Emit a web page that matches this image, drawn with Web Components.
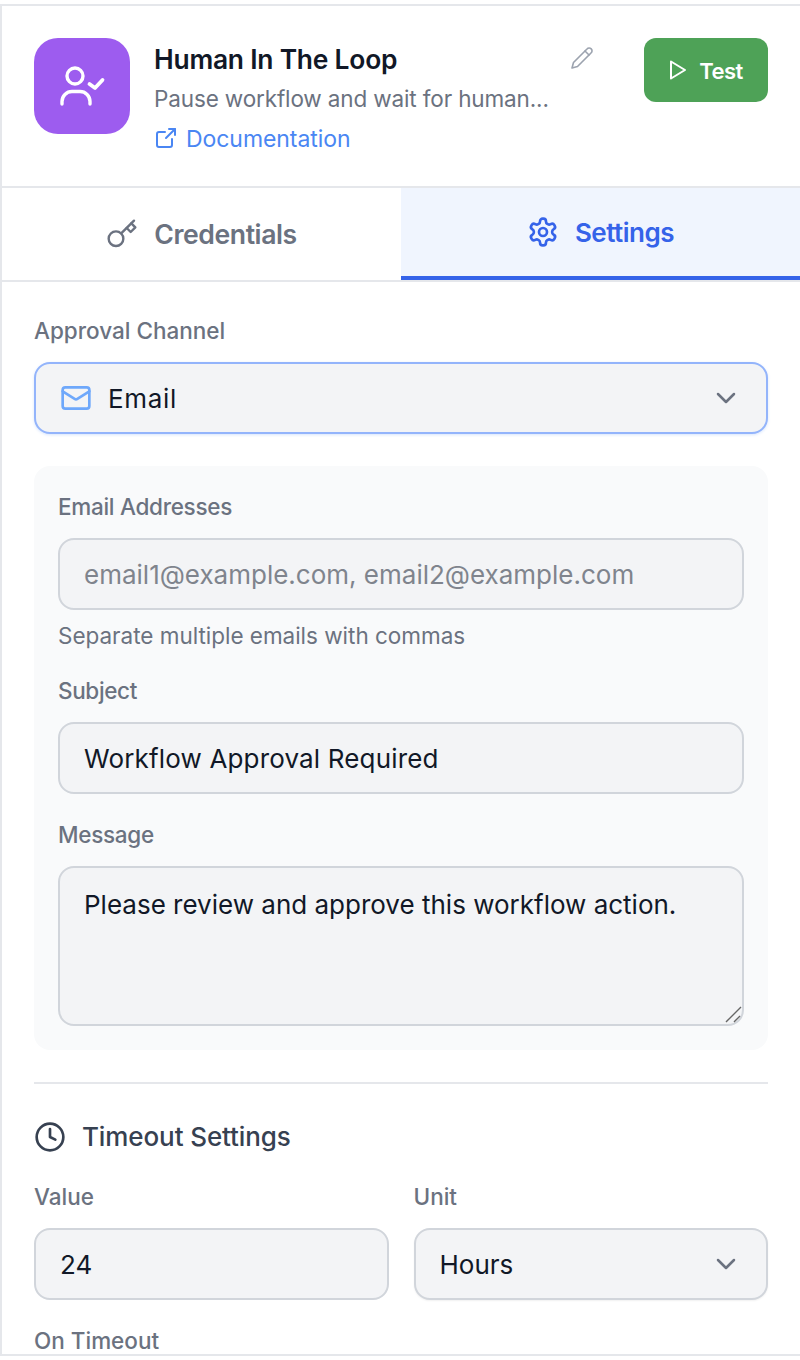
<!doctype html>
<html lang="en"><head><meta charset="utf-8"><title>Human In The Loop</title>
<style>html,body{margin:0;background:#fff}body{font-family:Inter,"Liberation Sans",sans-serif;overflow:hidden}</style></head>
<body>
<hitl-panel>
  <hitl-header slot="header" name="Human In The Loop" desc="Pause workflow and wait for human..." link="Documentation"></hitl-header>
  <hitl-tabs slot="tabs"></hitl-tabs>
  <hitl-field label="Approval Channel">
    <hitl-control kind="select" focused style="letter-spacing:.7px"><svg slot="icon" width="32" height="32" viewBox="0 0 24 24" fill="none" stroke="#6ea8fb" stroke-width="2" stroke-linecap="round" stroke-linejoin="round"><rect x="2" y="4" width="20" height="16" rx="2"/><path d="m22 7-8.97 5.7a1.94 1.94 0 0 1-2.06 0L2 7"/></svg>Email</hitl-control>
  </hitl-field>
  <hitl-card>
    <hitl-field label="Email Addresses" style="--ls:-.29px" hint="Separate multiple emails with commas"><hitl-control placeholder>email1@example.com, email2@example.com</hitl-control></hitl-field>
    <hitl-field label="Subject" style="--ls:-.35px"><hitl-control style="letter-spacing:.16px">Workflow Approval Required</hitl-control></hitl-field>
    <hitl-field label="Message" style="--ls:-.3px"><hitl-control kind="area">Please review and approve this workflow action.</hitl-control></hitl-field>
  </hitl-card>
  <hitl-section title="Timeout Settings">
    <hitl-grid>
      <hitl-field label="Value"><hitl-control>24</hitl-control></hitl-field>
      <hitl-field label="Unit"><hitl-control kind="select">Hours</hitl-control></hitl-field>
    </hitl-grid>
    <hitl-field label="On Timeout"></hitl-field>
  </hitl-section>
</hitl-panel>
<script>
const def=(name,html)=>{
  const t=document.createElement('template');t.innerHTML=html;
  customElements.define(name,class extends HTMLElement{
    constructor(){super();this.attachShadow({mode:'open'}).appendChild(t.content.cloneNode(true));}
    connectedCallback(){
      this.shadowRoot.querySelectorAll('[data-attr]').forEach(n=>{n.textContent=this.getAttribute(n.dataset.attr)||'';});
    }
  });
};
def('hitl-panel',`<style>
:host{display:block;height:1352px;margin-top:4px;box-sizing:border-box;border:2px solid #e5e7eb;border-right:0;overflow:hidden;background:#fff}
.body{padding:32px 32px 0;display:flex;flex-direction:column}
</style><slot name="header"></slot><slot name="tabs"></slot><div class="body"><slot></slot></div>`);
def('hitl-header',`<style>
:host{display:flex;box-sizing:border-box;height:182px;padding:32px 32px 0;gap:24px;border-bottom:2px solid #e5e7eb}
.tile{flex:none;width:96px;height:96px;border-radius:24px;background:#9d5cef}
.tile svg{display:block}
.text{flex:1;min-width:0;margin-right:26px;padding-top:1px;display:flex;flex-direction:column}
.row{display:flex;justify-content:space-between;height:40px;align-items:center}
h1{margin:0;font:600 26.4px/40px Inter,sans-serif;letter-spacing:-.22px;color:#111827;white-space:nowrap}
.row svg{align-self:flex-start;margin-top:7px}
p{margin:0;font:400 22.5px/40px Inter,sans-serif;letter-spacing:-.14px;color:#6b7280;white-space:nowrap}
a{display:flex;align-items:center;gap:8px;font:400 23px/40px Inter,sans-serif;letter-spacing:-.06px;color:#4a86f3;text-decoration:none;white-space:nowrap}
a svg{margin-top:-2px}
button{flex:none;width:124px;height:64px;border:0;border-radius:12px;background:#4ea257;color:#fff;font:600 22px/1 Inter,sans-serif;letter-spacing:-.6px;display:flex;align-items:center;justify-content:center;gap:12px;padding:2px 0 0 0}
button svg{margin-top:-2px}
</style>
<div class="tile"><svg width="96" height="96" viewBox="0 0 96 96" fill="none" stroke="#fff" stroke-width="3.4" stroke-linecap="round" stroke-linejoin="round"><circle cx="41" cy="38" r="8"/><path d="M28 66v-2.5a10 10 0 0 1 10-10h8a10 10 0 0 1 10 10V66"/><path stroke-width="3.8" d="M55.5 46 61 50 68.5 42"/></svg></div>
<div class="text">
  <div class="row"><h1 data-attr="name"></h1><svg width="24" height="24" viewBox="0 0 24 24" fill="none" stroke="#9ca3af" stroke-width="1.6" stroke-linecap="round" stroke-linejoin="round"><path d="M17 3a2.85 2.83 0 1 1 4 4L7.5 20.5 2 22l1.5-5.5Z"/><path d="m15 5 4 4"/></svg></div>
  <p data-attr="desc"></p>
  <a href="#"><svg width="24" height="24" viewBox="0 0 24 24" fill="none" stroke="#4a86f3" stroke-width="2" stroke-linecap="round" stroke-linejoin="round"><path d="M18 13v6a2 2 0 0 1-2 2H5a2 2 0 0 1-2-2V8a2 2 0 0 1 2-2h6"/><path d="m21 3-9 9"/><path d="M15 3h6v6"/></svg><span data-attr="link"></span></a>
</div>
<button><svg width="18" height="22" viewBox="0 0 18 22" fill="none" stroke="#fff" stroke-width="2" stroke-linejoin="round"><path d="M2 2.5 16 11 2 19.5Z"/></svg>Test</button>`);
def('hitl-tabs',`<style>
:host{display:flex;height:94px;box-sizing:border-box;border-bottom:2px solid #e5e7eb}
.tab{flex:1;display:flex;align-items:center;justify-content:center;gap:16px;font:600 26.6px/1 Inter,sans-serif;letter-spacing:-.42px;color:#6b7280;box-sizing:border-box}
.on{background:#f0f5fe;color:#3563e9;border-bottom:4px solid #3563e9;padding-top:2px;font-size:26px;letter-spacing:-.5px}
.on svg{margin-top:-2px}
</style>
<div class="tab"><svg width="32" height="32" viewBox="0 0 24 24" fill="none" stroke="#6b7280" stroke-width="1.8" stroke-linecap="round" stroke-linejoin="round"><circle cx="7.5" cy="15.5" r="5.5"/><path d="m21 2-9.6 9.6"/><path d="m15.5 7.5 3 3L22 7l-3-3"/></svg>Credentials</div>
<div class="tab on"><svg width="32" height="32" viewBox="0 0 24 24" fill="none" stroke="#3563e9" stroke-width="2" stroke-linecap="round" stroke-linejoin="round"><path d="M12.22 2h-.44a2 2 0 0 0-2 2v.18a2 2 0 0 1-1 1.73l-.43.25a2 2 0 0 1-2 0l-.15-.08a2 2 0 0 0-2.73.73l-.22.38a2 2 0 0 0 .73 2.73l.15.1a2 2 0 0 1 1 1.72v.51a2 2 0 0 1-1 1.74l-.15.09a2 2 0 0 0-.73 2.73l.22.38a2 2 0 0 0 2.73.73l.15-.08a2 2 0 0 1 2 0l.43.25a2 2 0 0 1 1 1.73V20a2 2 0 0 0 2 2h.44a2 2 0 0 0 2-2v-.18a2 2 0 0 1 1-1.73l.43-.25a2 2 0 0 1 2 0l.15.08a2 2 0 0 0 2.73-.73l.22-.39a2 2 0 0 0-.73-2.73l-.15-.08a2 2 0 0 1-1-1.74v-.5a2 2 0 0 1 1-1.74l.15-.09a2 2 0 0 0 .73-2.73l-.22-.38a2 2 0 0 0-2.73-.73l-.15.08a2 2 0 0 1-2 0l-.43-.25a2 2 0 0 1-1-1.73V4a2 2 0 0 0-2-2z"/><circle cx="12" cy="12" r="3"/></svg>Settings</div>`);
def('hitl-field',`<style>
:host{display:block}
label{display:block;font:500 22.5px/34px Inter,sans-serif;letter-spacing:var(--ls,0);color:#6b7280;margin-bottom:14px;white-space:nowrap}
.hint{display:none;margin-top:10px;font:400 22.5px/32px Inter,sans-serif;letter-spacing:-.02px;color:#6b7280;white-space:nowrap}
:host([hint]) .hint{display:block}
</style><label data-attr="label"></label><slot></slot><div class="hint" data-attr="hint"></div>`);
def('hitl-control',`<style>
:host{display:flex;align-items:center;box-sizing:border-box;height:72px;padding:0 24px;gap:16px;background:#f3f4f6;border:2px solid #d1d5db;border-radius:16px;font:400 26px/36px Inter,sans-serif;color:#111827;white-space:nowrap;position:relative}
:host([kind=select]){box-shadow:0 1px 2px rgba(0,0,0,.06)}
:host([focused]){border-color:#93b4fb;box-shadow:0 1px 3px rgba(59,130,246,.2)}
:host([placeholder]){color:#7f848d}
:host([kind=area]){height:160px;align-items:flex-start;padding-top:17px}
.grow{flex:1;min-width:0;padding-top:2px}
.chev,.grip{display:none}
:host([kind=select]) .chev{display:block;flex:none}
:host([kind=area]) .grip{display:block;position:absolute;right:0;bottom:0}
::slotted(svg){flex:none}
</style><slot name="icon"></slot><div class="grow"><slot></slot></div>
<svg class="chev" width="32" height="32" viewBox="0 0 24 24" fill="none" stroke="#6b7280" stroke-width="1.9" stroke-linecap="round" stroke-linejoin="round"><path d="m6 9 6 6 6-6"/></svg>
<svg class="grip" width="18" height="18" viewBox="0 0 18 18" fill="none" stroke="#666" stroke-width="1.4"><path d="M2 16 17 1M10 16l6-6"/></svg>`);
def('hitl-card',`<style>
:host{display:flex;flex-direction:column;margin-top:32px;padding:24px;border-radius:16px;background:#f9fafb}
::slotted(hitl-field:nth-child(2)){margin-top:22px}
::slotted(hitl-field:nth-child(3)){margin-top:24px}
</style><slot></slot>`);
def('hitl-section',`<style>
:host{display:block;margin-top:32px;padding-top:32px;border-top:2px solid #e5e7eb}
h2{margin:0 0 22px;height:42px;display:flex;align-items:center;gap:16px;font:500 26px/42px Inter,sans-serif;letter-spacing:-.1px;color:#374151}
::slotted(hitl-field){margin-top:24px}
</style><h2><svg width="32" height="32" viewBox="0 0 24 24" fill="none" stroke="#374151" stroke-width="2" stroke-linecap="round" stroke-linejoin="round"><circle cx="12" cy="12" r="10"/><path d="M12 6v6l4 2"/></svg><span data-attr="title"></span></h2><slot></slot>`);
def('hitl-grid',`<style>:host{display:grid;grid-template-columns:1fr 1fr;gap:25px}</style><slot></slot>`);
</script>
</body></html>
